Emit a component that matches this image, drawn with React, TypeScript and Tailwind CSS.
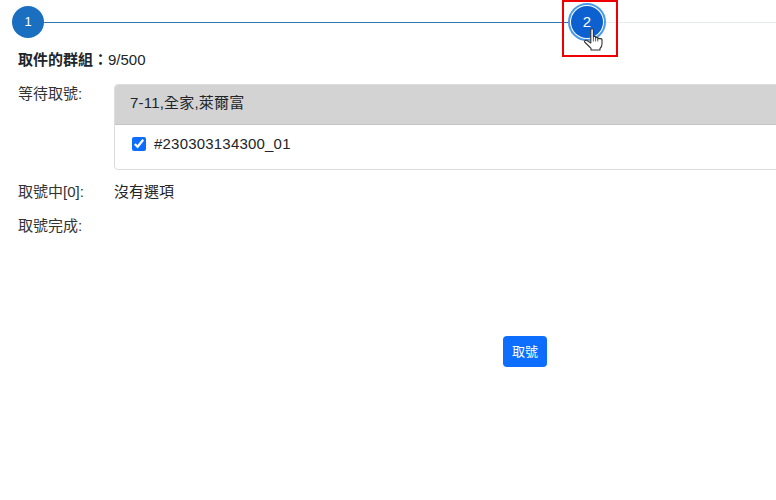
import React from "react";

const FONT = "font-['Liberation_Sans','Noto_Sans_CJK_TC',sans-serif]";

function HandCursor() {
  return (
    <svg viewBox="0 0 19 23" className="w-[19px] h-[23px]">
      <path
        d="M6.800 2c0-1.600 2.600-1.600 2.600 0V9c0-1 2.200-1 2.200 0v1c0-1 2.200-1 2.200 0v1c0-1 2.200-1 2.200 0 .2-.6 1.800-.6 2 .6V16c0 2-.8 3.400-2 4.500V22H7v-1.600C5 18 3 16.500 1 14.500c-1.200-1.400.6-3 2-2l3.800 2.500z"
        fill="#fff"
        stroke="#333"
        strokeWidth="1.100"
        strokeLinejoin="round"
      />
      <path d="M9.400 9v4.500M11.600 10v3.500M13.800 11v2.500" stroke="#333" strokeWidth="0.8" fill="none" />
    </svg>
  );
}

export default function App() {
  return (
    <div className={`${FONT} relative w-[776px] h-[500px] overflow-hidden bg-white text-[15px] text-[#212529]`}>
      {/* stepper */}
      <div className="flex items-center h-[44px] pl-[12px]">
        <div className="w-[32px] h-[32px] shrink-0 rounded-full bg-[#1a6fc0] text-white text-[13px] flex items-center justify-center">
          1
        </div>
        <div className="w-[524px] shrink-0 h-px bg-[#2f76b5]" />
        <div className="w-[38px] h-[38px] shrink-0 rounded-full border-[2px] border-[#4a9be8] bg-white flex items-center justify-center">
          <div className="w-[32px] h-[32px] rounded-full bg-[#0d60d0] text-white text-[15px] flex items-center justify-center">
            2
          </div>
        </div>
        <div className="flex-1 h-px bg-[#e9ecee]" />
      </div>

      {/* red highlight and pointer over step 2 */}
      <div className="absolute left-[562px] top-0 w-[56px] h-[57px] border-[2px] border-[#ee0000]" />
      <div className="absolute left-[584px] top-[28px]">
        <HandCursor />
      </div>

      <div className="pl-[18px] pt-[6px] leading-[20px]">
        <div>
          <span className="font-bold">取件的群組：</span>
          <span>9/500</span>
        </div>

        <div className="flex mt-[14px]">
          <div className="w-[96px] shrink-0 text-[#333]">等待取號:</div>
          <div className="w-[700px] shrink-0 rounded-[4px] border border-[#dcdcdc] overflow-hidden">
            <div className="h-[40px] bg-[#d3d3d3] border-b border-[#c4c4c4] flex items-center pl-[15px] pb-[3px] tracking-[0.2px]">
              7-11,全家,萊爾富
            </div>
            <div className="h-[44px] flex items-center pl-[17px] pb-[6px] gap-[8px]">
              <input type="checkbox" defaultChecked className="w-[14px] h-[14px] accent-[#0d6efd]" />
              <span className="tracking-[0.2px]">#230303134300_01</span>
            </div>
          </div>
        </div>

        <div className="flex mt-[12px]">
          <div className="w-[96px] shrink-0 text-[#333]">取號中[0]:</div>
          <div>沒有選項</div>
        </div>

        <div className="mt-[14px] text-[#333]">取號完成:</div>

        <div className="mt-[100px] pl-[485px]">
          <button className="w-[44px] h-[31px] rounded-[4px] bg-[#0d6efd] text-white text-[13px]">取號</button>
        </div>
      </div>
    </div>
  );
}
